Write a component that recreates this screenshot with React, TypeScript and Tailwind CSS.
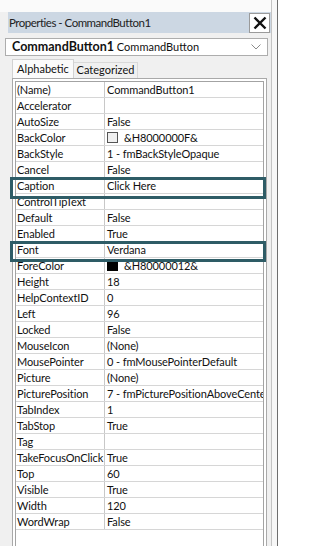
import React from "react";

interface PropRow {
    name: string;
    value: string;
    swatch?: "light" | "dark";
}

const rows: PropRow[] = [
    { name: "(Name)", value: "CommandButton1" },
    { name: "Accelerator", value: "" },
    { name: "AutoSize", value: "False" },
    { name: "BackColor", value: "&H8000000F&", swatch: "light" },
    { name: "BackStyle", value: "1 - fmBackStyleOpaque" },
    { name: "Cancel", value: "False" },
    { name: "Caption", value: "Click Here" },
    { name: "ControlTipText", value: "" },
    { name: "Default", value: "False" },
    { name: "Enabled", value: "True" },
    { name: "Font", value: "Verdana" },
    { name: "ForeColor", value: "&H80000012&", swatch: "dark" },
    { name: "Height", value: "18" },
    { name: "HelpContextID", value: "0" },
    { name: "Left", value: "96" },
    { name: "Locked", value: "False" },
    { name: "MouseIcon", value: "(None)" },
    { name: "MousePointer", value: "0 - fmMousePointerDefault" },
    { name: "Picture", value: "(None)" },
    { name: "PicturePosition", value: "7 - fmPicturePositionAboveCenter" },
    { name: "TabIndex", value: "1" },
    { name: "TabStop", value: "True" },
    { name: "Tag", value: "" },
    { name: "TakeFocusOnClick", value: "True" },
    { name: "Top", value: "60" },
    { name: "Visible", value: "True" },
    { name: "Width", value: "120" },
    { name: "WordWrap", value: "False" },
];

function CloseIcon() {
    return (
        <svg width="14" height="14" viewBox="0 0 14 14">
            <path d="M1.5 1.5 L12.5 12.5 M12.5 1.5 L1.5 12.5" stroke="#111" strokeWidth="2.4" />
        </svg>
    );
}

function Chevron() {
    return (
        <svg width="10" height="6" viewBox="0 0 10 6">
            <path d="M0.5 0.5 L5 5 L9.5 0.5" stroke="#8a8a8a" strokeWidth="1" fill="none" />
        </svg>
    );
}

export default function App() {
    return (
        <div className="relative flex w-[283px] h-[546px] overflow-hidden bg-white [font-family:Lato,sans-serif] text-[#111]">
            {/* Properties window */}
            <div className="flex flex-col w-[272px] h-full bg-[#f0f0f0] border-r border-[#c4c4c4]">
                <div className="h-[12px] bg-[#fafafa] shrink-0" />

                {/* Title bar */}
                <div className="flex items-start ml-[8px] w-[263px] h-[21px] bg-[#ccd7e3] shrink-0">
                    <span className="pl-[1px] pt-[1px] text-[11.5px] tracking-[-0.5px] leading-[19px] text-[#222] whitespace-nowrap">
                        Properties - CommandButton1
                    </span>
                    <div className="ml-auto mt-[1px] mr-[1px] flex h-[20px] w-[21px] items-center justify-center bg-white border border-[#9a9a9a]">
                        <CloseIcon />
                    </div>
                </div>

                {/* Object selector */}
                <div className="mt-[5px] ml-[5px] flex h-[18px] w-[263px] items-center bg-white border border-[#adadad] shrink-0">
                    <span className="pl-[6px] text-[11px] leading-[16px] whitespace-nowrap">
                        <span className="font-bold text-[12.5px]">CommandButton1</span> CommandButton
                    </span>
                    <span className="ml-auto mr-[6px] flex items-center">
                        <Chevron />
                    </span>
                </div>

                {/* Tabs */}
                <div className="mt-[3px] flex items-end h-[19px] shrink-0">
                    <div className="ml-[12px] flex h-[19px] w-[62px] items-center justify-center bg-[#fbfbfb] border border-b-0 border-[#d2d2d2] text-[11px]">
                        Alphabetic
                    </div>
                    <div className="flex h-[16px] w-[64px] items-center justify-center bg-[#f0f0f0] border border-l-0 border-b-0 border-[#d9d9d9] text-[11px]">
                        Categorized
                    </div>
                </div>

                {/* Grid page */}
                <div className="ml-[12px] w-[255px] flex-1 bg-white border border-[#a9a9a9] border-b-0 pt-[2px] px-[2px]">
                    <div className="h-full border border-[#a3a3a3] border-b-0">
                        {rows.map((r) => (
                            <div key={r.name} className="flex h-[16px] border-b border-[#d6d6d6] text-[11px] tracking-[-0.1px] leading-[15px]">
                                <div className="w-[89px] shrink-0 border-r border-[#c8c8c8] pl-[1px] whitespace-nowrap overflow-hidden">
                                    {r.name}
                                </div>
                                <div className="flex flex-1 items-center min-w-0 pl-[2px] whitespace-nowrap overflow-hidden">
                                    {r.swatch && (
                                        <span
                                            className={
                                                r.swatch === "dark"
                                                    ? "mr-[6px] h-[11px] w-[11px] shrink-0 bg-black"
                                                    : "mr-[6px] h-[11px] w-[11px] shrink-0 bg-[#f0f0f0] border border-[#555]"
                                            }
                                        />
                                    )}
                                    <span className="leading-[15px]">{r.value}</span>
                                </div>
                            </div>
                        ))}
                    </div>
                </div>
            </div>

            {/* Frame edge */}
            <div className="w-[5px] h-full bg-[#f7f7f7]" />
            <div className="w-[1px] h-full bg-[#6e6e6e]" />
            <div className="flex-1 h-full bg-white" />

            {/* Highlight annotations */}
            <div className="absolute left-[10px] top-[177px] w-[256px] h-[22px] border-[3px] border-[#2e5c66]" />
            <div className="absolute left-[10px] top-[241px] w-[256px] h-[21px] border-[3px] border-[#2e5c66]" />
        </div>
    );
}
